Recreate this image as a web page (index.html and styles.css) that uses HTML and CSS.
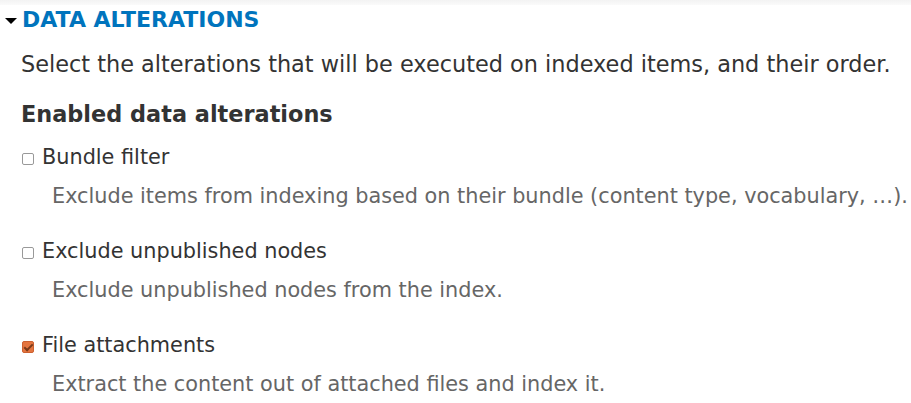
FILE: index.html
```html
<!DOCTYPE html>
<html lang="en">
  <head>
    <meta charset="UTF-8" />
    <title>Data alterations</title>
    <link rel="stylesheet" href="styles.css">
  </head>
  <body>
    <div class="topbar"></div>
    <details class="fieldset" open>
      <summary class="legend">DATA ALTERATIONS</summary>
      <div class="fieldset-body">
        <p class="intro">Select the alterations that will be executed on indexed items, and their order.</p>
        <h4 class="group-title">Enabled data alterations</h4>

        <div class="item">
          <label class="option"><input type="checkbox" /> Bundle filter</label>
          <div class="description">Exclude items from indexing based on their bundle (content type, vocabulary, …).</div>
        </div>

        <div class="item">
          <label class="option"><input type="checkbox" /> Exclude unpublished nodes</label>
          <div class="description">Exclude unpublished nodes from the index.</div>
        </div>

        <div class="item">
          <label class="option"><input type="checkbox" checked /> File attachments</label>
          <div class="description">Extract the content out of attached files and index it.</div>
        </div>
      </div>
    </details>
  </body>
</html>
```

FILE: styles.css
```css
* {
  margin: 0;
  padding: 0;
  box-sizing: border-box;
}

body {
  font-family: "DejaVu Sans", sans-serif;
  font-size: 20.8px;
  color: #333;
  background: #fff;
  overflow: hidden;
}

.topbar {
  height: 5px;
  background: linear-gradient(#f3f3f3, #fafafa);
}

.legend {
  list-style: none;
  display: flex;
  align-items: center;
  gap: 5px;
  padding: 2px 0 0 5px;
  font-weight: bold;
  font-size: 22px;
  line-height: 26px;
  color: #0074bd;
  cursor: pointer;
}

.legend::-webkit-details-marker {
  display: none;
}

.legend::before {
  content: "";
  border-left: 6px solid transparent;
  border-right: 6px solid transparent;
  border-top: 6px solid #000;
  margin-top: 2px;
}

.fieldset-body {
  padding: 0 0 0 21px;
}

.intro {
  margin-top: 18px;
  font-size: 22.4px;
  line-height: 26px;
}

.group-title {
  margin-top: 24px;
  font-size: 22.4px;
  line-height: 26px;
}

.item {
  margin-top: 18px;
}

.item + .item {
  margin-top: 30px;
}

.option {
  display: flex;
  align-items: center;
  gap: 8px;
  line-height: 25px;
  color: #333;
}

.option input {
  appearance: none;
  width: 12px;
  height: 12px;
  margin: 3px 0 0 1px;
  border: 1px solid #999;
  border-radius: 2px;
  background: #fff;
  position: relative;
}

.option input:checked {
  background: #e4753f;
  border-color: #cc6030;
}

.option input:checked::after {
  content: "";
  position: absolute;
  left: 3px;
  top: 0;
  width: 3px;
  height: 7px;
  border: solid #7a3a1a;
  border-width: 0 2px 2px 0;
  transform: rotate(45deg);
}

.description {
  margin: 14px 0 0 31px;
  line-height: 25px;
  color: #666;
}
```
